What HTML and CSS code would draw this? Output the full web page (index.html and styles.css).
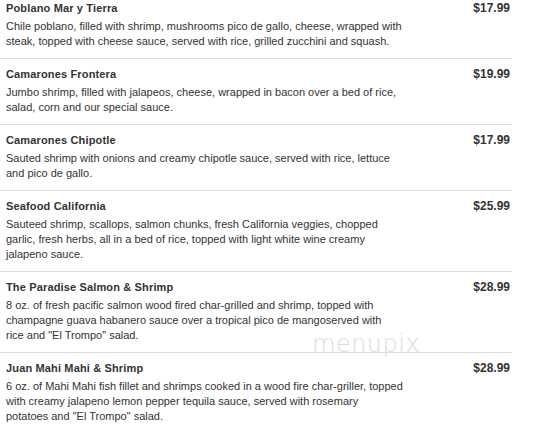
FILE: index.html
```html
<!DOCTYPE html>
<html>
<head>
<meta charset="utf-8">
<link rel="stylesheet" href="styles.css">
</head>
<body>
<div class="menu">
  <div class="item">
    <div class="head"><span class="name">Poblano Mar y Tierra</span><span class="price">$17.99</span></div>
    <p class="desc">Chile poblano, filled with shrimp, mushrooms pico de gallo, cheese, wrapped with<br>steak, topped with cheese sauce, served with rice, grilled zucchini and squash.</p>
  </div>
  <div class="item">
    <div class="head"><span class="name">Camarones Frontera</span><span class="price">$19.99</span></div>
    <p class="desc">Jumbo shrimp, filled with jalapeos, cheese, wrapped in bacon over a bed of rice,<br>salad, corn and our special sauce.</p>
  </div>
  <div class="item">
    <div class="head"><span class="name">Camarones Chipotle</span><span class="price">$17.99</span></div>
    <p class="desc">Sauted shrimp with onions and creamy chipotle sauce, served with rice, lettuce<br>and pico de gallo.</p>
  </div>
  <div class="item">
    <div class="head"><span class="name">Seafood California</span><span class="price">$25.99</span></div>
    <p class="desc">Sauteed shrimp, scallops, salmon chunks, fresh California veggies, chopped<br>garlic, fresh herbs, all in a bed of rice, topped with light white wine creamy<br>jalapeno sauce.</p>
  </div>
  <div class="item">
    <div class="head"><span class="name">The Paradise Salmon &amp; Shrimp</span><span class="price">$28.99</span></div>
    <p class="desc">8 oz. of fresh pacific salmon wood fired char-grilled and shrimp, topped with<br>champagne guava habanero sauce over a tropical pico de mangoserved with<br>rice and "El Trompo" salad.</p>
  </div>
  <div class="item">
    <div class="head"><span class="name">Juan Mahi Mahi &amp; Shrimp</span><span class="price">$28.99</span></div>
    <p class="desc">6 oz. of Mahi Mahi fish fillet and shrimps cooked in a wood fire char-griller, topped<br>with creamy jalapeno lemon pepper tequila sauce, served with rosemary<br>potatoes and "El Trompo" salad.</p>
  </div>
  <div class="watermark">menupix</div>
</div>
</body>
</html>
```

FILE: styles.css
```css
html, body {
  margin: 0;
  padding: 0;
  background: #ffffff;
}
body {
  font-family: "Liberation Sans", Arial, sans-serif;
  color: #333333;
}
.menu {
  position: relative;
  width: 512px;
}
.item {
  padding: 8px 2px 9px 6px;
  border-bottom: 1px solid #dddddd;
}
.item:first-child {
  padding-top: 1px;
}
.head {
  display: flex;
  justify-content: space-between;
  align-items: baseline;
  height: 14px;
  line-height: 14px;
}
.name {
  font-size: 11px;
  font-weight: bold;
  letter-spacing: 0.15px;
}
.price {
  font-size: 12px;
  font-weight: bold;
}
.desc {
  margin: 4px 0 0 0;
  width: 440px;
  font-size: 11px;
  line-height: 15px;
  white-space: nowrap;
}
.watermark {
  position: absolute;
  left: 312px;
  top: 332px;
  font-family: "DejaVu Sans", sans-serif;
  font-weight: 200;
  font-size: 24px;
  line-height: 24px;
  color: #dcdcdc;
  letter-spacing: 0.5px;
}
```
